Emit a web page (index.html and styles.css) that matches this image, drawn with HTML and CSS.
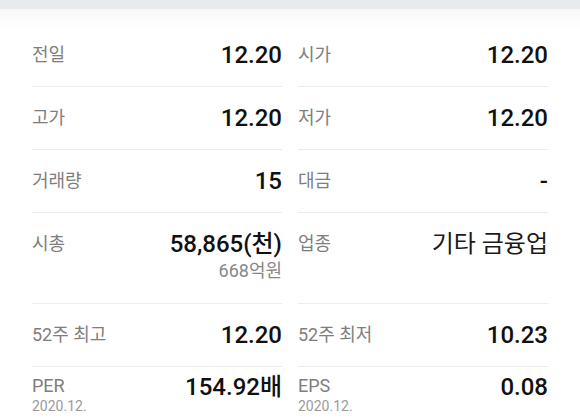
FILE: index.html
```html
<!DOCTYPE html>
<html lang="ko">
<head>
    <meta charset="UTF-8">
    <meta name="viewport" content="width=device-width, initial-scale=1.0">
    <title>종목 시세 정보</title>
    <link rel="stylesheet" href="styles.css">
</head>
<body>
    <div class="top-bar"></div>

    <div class="info-card">
        <div class="info-grid">
            <div class="info-row">
                <span class="label">전일</span>
                <span class="value">12.20</span>
            </div>
            <div class="info-row">
                <span class="label">시가</span>
                <span class="value">12.20</span>
            </div>

            <div class="info-row">
                <span class="label">고가</span>
                <span class="value">12.20</span>
            </div>
            <div class="info-row">
                <span class="label">저가</span>
                <span class="value">12.20</span>
            </div>

            <div class="info-row">
                <span class="label">거래량</span>
                <span class="value">15</span>
            </div>
            <div class="info-row">
                <span class="label">대금</span>
                <span class="value">-</span>
            </div>

            <div class="info-row">
                <span class="label">시총</span>
                <div class="value-box">
                    <span class="value">58,865(천)</span>
                    <span class="sub-value">668억원</span>
                </div>
            </div>
            <div class="info-row">
                <span class="label">업종</span>
                <span class="value value-text">기타 금융업</span>
            </div>

            <div class="info-row">
                <span class="label">52주 최고</span>
                <span class="value">12.20</span>
            </div>
            <div class="info-row">
                <span class="label">52주 최저</span>
                <span class="value">10.23</span>
            </div>

            <div class="info-row info-row-tight">
                <div class="label-box">
                    <span class="label label-en">PER</span>
                    <span class="label-date">2020.12.</span>
                </div>
                <span class="value">154.92배</span>
            </div>
            <div class="info-row info-row-tight">
                <div class="label-box">
                    <span class="label label-en">EPS</span>
                    <span class="label-date">2020.12.</span>
                </div>
                <span class="value">0.08</span>
            </div>
        </div>
    </div>
</body>
</html>
```

FILE: styles.css
```css
body {
    margin: 0;
    background-color: #fff;
    font-family: Roboto, "Noto Sans CJK KR", sans-serif;
    color: #111;
}
.top-bar {
    height: 9px;
    background-color: #e8ebee;
}
.info-card {
    padding: 15px 32px 0 32px;
    background: linear-gradient(#f8f8f8, #fff 22px);
}
.info-grid {
    display: grid;
    grid-template-columns: 250px 250px;
    column-gap: 16px;
}
.info-row {
    display: flex;
    justify-content: space-between;
    align-items: flex-start;
    padding: 18px 0;
    border-bottom: 1px solid #ececec;
}
.info-row-tight {
    padding-top: 7px;
    border-bottom: none;
}
.label {
    font-size: 18px;
    line-height: 26px;
    color: #7e7e7e;
}
.label-box {
    display: flex;
    flex-direction: column;
}
.label-en {
    font-size: 18px;
    line-height: 24px;
}
.label-date {
    font-size: 14px;
    line-height: 16px;
    color: #9a9a9a;
}
.value {
    font-size: 24px;
    line-height: 26px;
    font-weight: 500;
    color: #111;
}
.value-text {
    font-weight: 400;
    color: #1a1a1a;
}
.value-box {
    display: flex;
    flex-direction: column;
    align-items: flex-end;
}
.sub-value {
    font-size: 18px;
    line-height: 28px;
    color: #888;
}
```
